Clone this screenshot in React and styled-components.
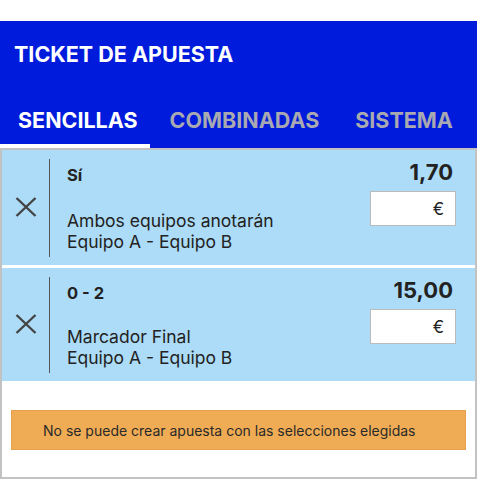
import React from "react";
import styled, { createGlobalStyle } from "styled-components";

const GlobalStyle = createGlobalStyle`
  body {
    margin: 0;
    background: #ffffff;
    font-family: Inter, "Liberation Sans", sans-serif;
  }
`;

const bets = [
  { id: 1, pick: "Sí", market: "Ambos equipos anotarán", event: "Equipo A - Equipo B", odds: "1,70" },
  { id: 2, pick: "0 - 2", market: "Marcador Final", event: "Equipo A - Equipo B", odds: "15,00" },
];

const tabs = ["SENCILLAS", "COMBINADAS", "SISTEMA"];

const CloseIcon = () => (
  <svg width="22" height="20" viewBox="0 0 22 20" fill="none">
    <path d="M1.5 1 L20.5 19 M20.5 1 L1.5 19" stroke="#444" strokeWidth="2.4" />
  </svg>
);

const App = () => {
  return (
    <>
      <GlobalStyle />
      <StyledTicket>
        <Header>
          <Title>TICKET DE APUESTA</Title>
          <Tabs>
            {tabs.map((tab, i) => (
              <Tab key={tab} active={i === 0 ? 1 : 0}>
                {tab}
              </Tab>
            ))}
          </Tabs>
        </Header>
        <Panel>
          {bets.map((bet) => (
            <BetRow key={bet.id}>
              <RemoveButton>
                <CloseIcon />
              </RemoveButton>
              <BetInfo>
                <Pick>{bet.pick}</Pick>
                <Market>
                  {bet.market}
                  <br />
                  {bet.event}
                </Market>
              </BetInfo>
              <Stake>
                <Odds>{bet.odds}</Odds>
                <StakeInput>€</StakeInput>
              </Stake>
            </BetRow>
          ))}
          <Alert>No se puede crear apuesta con las selecciones elegidas</Alert>
        </Panel>
      </StyledTicket>
    </>
  );
};

const StyledTicket = styled.div`
  width: 477px;
  padding-top: 21px;
`;

const Header = styled.div`
  background-color: #001bdc;
  color: #ffffff;
`;

const Title = styled.h1`
  margin: 0;
  padding: 20px 14px 0;
  font-size: 21.5px;
  line-height: 26px;
  font-weight: 700;
`;

const Tabs = styled.div`
  display: flex;
  margin-top: 40px;
`;

const Tab = styled.div`
  padding: 0 12px 11px 18px;
  font-size: 21.5px;
  line-height: 26px;
  font-weight: 700;
  color: ${(p) => (p.active ? "#ffffff" : "#a9a9b1")};
  border-bottom: 4px solid ${(p) => (p.active ? "#ffffff" : "transparent")};
  & + & {
    padding: 0 16px 11px 20px;
  }
`;

const Panel = styled.div`
  border: 2px solid #c2c2c2;
  padding-bottom: 27px;
`;

const BetRow = styled.div`
  display: flex;
  background-color: #addcf8;
  height: 115px;
  padding: 9px 0 8px;
  box-sizing: border-box;
  & + & {
    border-top: 3px solid #ffffff;
    height: 116px;
  }
`;

const RemoveButton = styled.div`
  width: 47px;
  display: flex;
  align-items: center;
  justify-content: center;
  padding-bottom: 2px;
  box-sizing: border-box;
`;

const BetInfo = styled.div`
  flex: 1;
  border-left: 1px solid #555;
  padding: 6px 0 5px 17px;
  display: flex;
  flex-direction: column;
  justify-content: space-between;
  color: #222;
`;

const Pick = styled.div`
  font-size: 16.5px;
  line-height: 20px;
  font-weight: 700;
`;

const Market = styled.div`
  font-size: 17.5px;
  line-height: 20.5px;
`;

const Stake = styled.div`
  width: 86px;
  margin-right: 19px;
  display: flex;
  flex-direction: column;
  align-items: flex-end;
`;

const Odds = styled.div`
  font-size: 22px;
  line-height: 26px;
  font-weight: 700;
  color: #222;
  padding-right: 3px;
`;

const StakeInput = styled.div`
  margin-top: 6px;
  width: 86px;
  height: 35px;
  box-sizing: border-box;
  background: #ffffff;
  border: 1px solid #bbb;
  display: flex;
  align-items: center;
  justify-content: flex-end;
  padding-right: 11px;
  font-size: 17px;
  color: #222;
`;

const Alert = styled.div`
  margin: 29px 9px 0;
  height: 40px;
  box-sizing: border-box;
  background-color: #f0ac54;
  border: 1px solid #e3a04e;
  display: flex;
  align-items: center;
  padding-left: 31px;
  font-size: 14px;
  color: #2a2a2a;
`;

export default App;
